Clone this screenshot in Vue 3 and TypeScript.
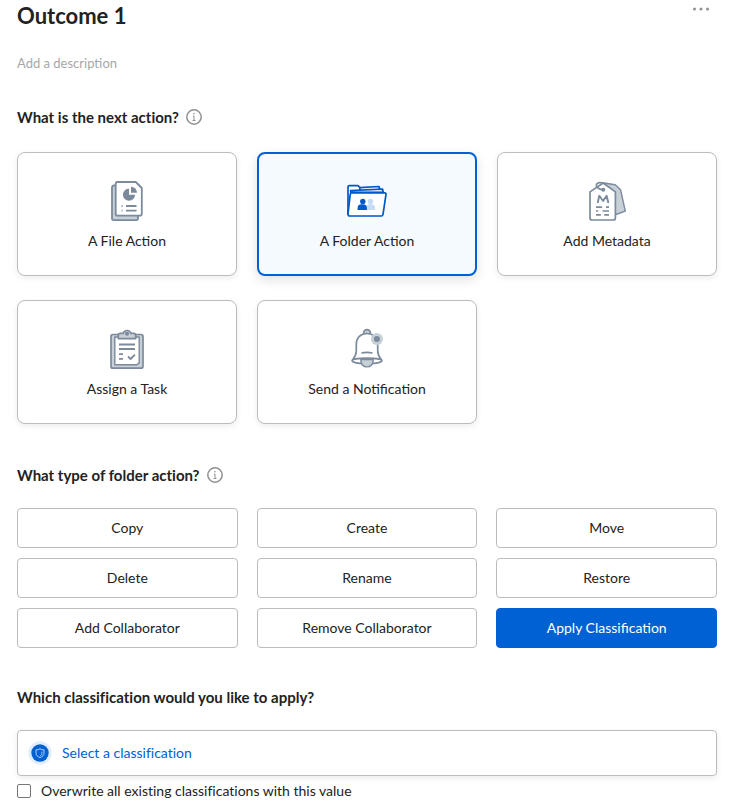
<script setup lang="ts">
import { ref } from 'vue'

type IconName = 'file' | 'folder' | 'metadata' | 'task' | 'bell'

interface ActionCard {
  label: string
  icon: IconName
}

const actions: ActionCard[] = [
  { label: 'A File Action', icon: 'file' },
  { label: 'A Folder Action', icon: 'folder' },
  { label: 'Add Metadata', icon: 'metadata' },
  { label: 'Assign a Task', icon: 'task' },
  { label: 'Send a Notification', icon: 'bell' },
]

const folderActions: string[] = [
  'Copy',
  'Create',
  'Move',
  'Delete',
  'Rename',
  'Restore',
  'Add Collaborator',
  'Remove Collaborator',
  'Apply Classification',
]

const selectedAction = ref<IconName>('folder')
const selectedFolderAction = ref('Apply Classification')
const description = ref('')
const overwrite = ref(false)
</script>

<template>
  <main class="outcome">
    <header class="header">
      <h1 class="title">Outcome 1</h1>
      <button class="icon-button more" type="button" aria-label="More options">
        <svg width="18" height="4" viewBox="0 0 18 4" fill="#909090">
          <circle cx="2.5" cy="2" r="1.5" />
          <circle cx="9" cy="2" r="1.5" />
          <circle cx="15.5" cy="2" r="1.5" />
        </svg>
      </button>
    </header>

    <input
      v-model="description"
      class="description"
      type="text"
      placeholder="Add a description"
      aria-label="Description"
    />

    <section class="section">
      <div class="heading-row">
        <h2 class="heading">What is the next action?</h2>
        <button class="icon-button" type="button" aria-label="About the next action">
          <svg width="16" height="16" viewBox="0 0 16 16" fill="none" stroke="#909090">
            <circle cx="8" cy="8" r="7.2" stroke-width="1.5" />
            <path d="M7 7h1v4.500M6.500 11.500h3" stroke-width="1" />
            <circle cx="8" cy="4.700" r=".8" fill="#909090" stroke="none" />
          </svg>
        </button>
      </div>

      <div class="cards">
        <button
          v-for="action in actions"
          :key="action.icon"
          type="button"
          class="card"
          :class="{ selected: selectedAction === action.icon }"
          :aria-pressed="selectedAction === action.icon"
          @click="selectedAction = action.icon"
        >
          <svg v-if="action.icon === 'file'" class="card-icon" viewBox="7 8 40 44" fill="none" stroke="#7b8a9c" stroke-width="1.8" stroke-linejoin="round">
            <path d="M15.5 15.5h-1.700a1.800 1.800 0 0 0-1.800 1.800v31a1.800 1.800 0 0 0 1.800 1.800h22.400a1.800 1.800 0 0 0 1.800-1.800v-2.500" fill="#c7cfd7" />
            <path d="M17.600 12h18.200l6 6v25.800a1.900 1.900 0 0 1-1.900 1.900H17.600a1.900 1.900 0 0 1-1.900-1.900V13.900a1.900 1.900 0 0 1 1.900-1.900Z" fill="#fff" />
            <path d="M29 18.600a6.100 6.100 0 1 0 6.100 6.100H29Z" fill="#7b8a9c" stroke="none" />
            <path d="M31 16.800a6 6 0 0 1 6 6h-6Z" fill="#7b8a9c" stroke="none" />
            <path d="M26 36h10.500M26 40.600h10.500" />
            <path d="M21.300 36h1.500M21.300 40.600h1.500" stroke="#a9b4bf" />
          </svg>

          <svg v-else-if="action.icon === 'folder'" class="card-icon" viewBox="7 8 40 44" fill="none" stroke="#0057c8" stroke-width="1.700" stroke-linejoin="round">
            <path d="M8 44V17a1.300 1.300 0 0 1 1.300-1.300h8.900l1.700 2.100v5.500L10 44Z" fill="#fff" />
            <path d="M19.500 17.700 39 16.500l.8 3" fill="#fff" />
            <path d="M10.500 20.600 42.500 19l.8 3.400H11Z" fill="#d5e6fb" />
            <path d="M11.700 22.900h33.100a1.200 1.200 0 0 1 1.200 1.400l-3 20.100a1.900 1.900 0 0 1-1.900 1.600H9.700a1.700 1.700 0 0 1-1.700-2l2.200-19.600a1.600 1.600 0 0 1 1.500-1.500Z" fill="#fff" />
            <path d="M25.800 40v-1.800a3.900 3.900 0 0 1 3.900-3.900h1.500a3.900 3.900 0 0 1 3.900 3.900V40Z" fill="#c5dcf7" stroke="none" />
            <circle cx="30.400" cy="31.400" r="2.700" fill="#c5dcf7" stroke="none" />
            <path d="M17.600 40v-1.800a3.900 3.900 0 0 1 3.900-3.900H23a3.900 3.900 0 0 1 3.900 3.900V40Z" fill="#0057c8" stroke="none" />
            <circle cx="22.800" cy="31.400" r="2.700" fill="#0057c8" stroke="none" />
          </svg>

          <svg v-else-if="action.icon === 'metadata'" class="card-icon" viewBox="7 8 40 44" fill="none" stroke="#7b8a9c" stroke-width="1.700" stroke-linejoin="round" stroke-linecap="round">
            <path d="m24 13 11.200 1.700 5.400 5.100 4.700 21.400-9.400 3.300Z" fill="#c7cfd7" stroke-width="1.400" />
            <path d="m23.200 13 12.200 8.900V48a2 2 0 0 1-2 2H12a2 2 0 0 1-2-2V21.900Z" fill="#fff" />
            <path d="M23.500 19.800c-3.800 0-7.800-2.400-7-5.200 1-3 6.200-2 8.700-.5" />
            <circle cx="23.300" cy="19.800" r="1.100" fill="#7b8a9c" />
            <path d="m17.800 32.200 1.500-6.400 3.800 5.200 3.500-5.200 1.600 6.400" stroke-width="1.900" />
            <path d="M16 37.100h6.100M26 37.100h3M16 41h2.200M22.500 41h6.500M16 44.900h4.800M24.200 44.900h4.800" stroke-linecap="butt" />
          </svg>

          <svg v-else-if="action.icon === 'task'" class="card-icon" viewBox="7 6 40 44" fill="none" stroke="#7b8a9c" stroke-width="1.700" stroke-linejoin="round">
            <rect x="11" y="14.500" width="32" height="33.700" rx="2" fill="#c7cfd7" />
            <path d="M14.800 17h24.400v25.900l-2.300 1.800H14.800Z" fill="#fff" stroke-width="1.400" />
            <path d="M18.300 18.600v-3.200a2 2 0 0 1 2-2H23a4.200 4.200 0 0 1 8 0h2.700a2 2 0 0 1 2 2v3.200Z" fill="#c7cfd7" />
            <circle cx="27" cy="13.700" r="1.200" fill="#7b8a9c" />
            <path d="M19 24.500h16M19 29h16M19 34.100h4M19 38.900h4" stroke-width="1.800" />
            <path d="m28 36.500 2.600 2.500 4.300-4.300" stroke-width="1.800" />
          </svg>

          <svg v-else class="card-icon" viewBox="7 6 40 44" fill="none" stroke="#7b8a9c" stroke-width="1.700" stroke-linejoin="round">
            <path d="M23.600 13.500v-.4a3.400 3.400 0 0 1 6.800 0v.4" fill="#c7cfd7" />
            <path d="M12.500 40c2.200-2.600 3.800-5.400 3.800-9.200v-6.200c0-7 4.500-11.100 10.700-11.100s10.700 4.100 10.700 11.100v6.200c0 3.800 1.600 6.600 3.800 9.200" fill="#fff" />
            <path d="M12.100 40.600c0-1.500 6.600-2.400 14.900-2.400s14.900.9 14.900 2.400c0 1.800-6.600 3.200-14.900 3.200s-14.900-1.400-14.900-3.200Z" fill="#fff" />
            <path d="M20.800 39.500h12.400c.3 4.600-2.600 7.400-6.200 7.400s-6.500-2.800-6.200-7.400Z" fill="#c7cfd7" stroke-width="1.400" />
            <path d="M21.500 33c3.300-.8 7.700-.8 11 0" />
            <circle cx="36.900" cy="18.900" r="6" fill="#c7cfd7" stroke="none" />
            <circle cx="36.900" cy="18.900" r="3" fill="#7b8a9c" stroke="none" />
          </svg>
          <span>{{ action.label }}</span>
        </button>
      </div>
    </section>

    <section class="section">
      <div class="heading-row">
        <h2 class="heading">What type of folder action?</h2>
        <button class="icon-button" type="button" aria-label="About folder actions">
          <svg width="16" height="16" viewBox="0 0 16 16" fill="none" stroke="#909090">
            <circle cx="8" cy="8" r="7.200" stroke-width="1.500" />
            <path d="M7 7h1v4.500M6.500 11.500h3" stroke-width="1" />
            <circle cx="8" cy="4.700" r=".8" fill="#909090" stroke="none" />
          </svg>
        </button>
      </div>

      <div class="options">
        <button
          v-for="name in folderActions"
          :key="name"
          type="button"
          class="option"
          :class="{ selected: selectedFolderAction === name }"
          :aria-pressed="selectedFolderAction === name"
          @click="selectedFolderAction = name"
        >
          {{ name }}
        </button>
      </div>
    </section>

    <section class="section">
      <div class="heading-row">
        <h2 class="heading">Which classification would you like to apply?</h2>
      </div>

      <button class="classification" type="button">
        <svg width="24" height="24" viewBox="0 0 24 24" fill="none">
          <circle cx="12" cy="12" r="11.700" fill="#e2edfa" />
          <circle cx="12" cy="12" r="8.700" fill="#0061d5" />
          <path d="M12 7.700c1.300.9 2.600 1.200 4 1.200v3.300c0 2.100-1.600 3.500-4 4.400-2.400-.9-4-2.300-4-4.400V8.900c1.400 0 2.700-.3 4-1.200Z" stroke="#c9def7" stroke-width=".9" />
          <path d="M13.800 10.600v2.200c0 .8-.6 1.400-1.700 2" stroke="#c9def7" stroke-width=".8" />
        </svg>
        <span>Select a classification</span>
      </button>

      <label class="overwrite">
        <input v-model="overwrite" type="checkbox" />
        <span>Overwrite all existing classifications with this value</span>
      </label>
    </section>
  </main>
</template>

<style>
body {
  margin: 0;
  background: #fff;
}
</style>

<style scoped>
.outcome {
  padding: 0 13px 4px 17px;
  color: #222;
  font-family: Lato, "Liberation Sans", sans-serif;
  font-size: 14px;
  line-height: 20px;
  -webkit-font-smoothing: antialiased;
}

button,
input {
  font: inherit;
  color: inherit;
}

button {
  cursor: pointer;
}

.header {
  display: flex;
  justify-content: space-between;
  align-items: flex-start;
}

.title {
  margin: 0;
  font-size: 22px;
  line-height: 32px;
  font-weight: 700;
}

.icon-button {
  display: flex;
  padding: 0;
  border: 0;
  background: none;
}

.more {
  padding: 7px;
}

.description {
  display: block;
  width: 100%;
  box-sizing: border-box;
  height: 20px;
  margin-top: 21px;
  padding: 0;
  border: 0;
  background: none;
  font-size: 13px;
}

.description::placeholder {
  color: #a7a7a7;
  opacity: 1;
}

.section {
  margin-top: 41px;
}

.section:last-child {
  margin-top: 39px;
}

.description + .section {
  margin-top: 34px;
}

.heading-row {
  display: flex;
  align-items: center;
  gap: 7px;
  height: 20px;
}

.heading {
  margin: 0;
  font-size: 15px;
  line-height: 20px;
  font-weight: 700;
}

.heading,
.classification,
.overwrite {
  font-variant-ligatures: none;
}

.cards {
  display: grid;
  grid-template-columns: repeat(3, 1fr);
  gap: 24px 20px;
  margin-top: 25px;
}

.card {
  display: flex;
  flex-direction: column;
  align-items: center;
  gap: 9px;
  padding: 25px 8px 24px;
  border: 1px solid #bcbcbc;
  border-radius: 8px;
  background: #fff;
  box-shadow: 0 2px 6px rgba(0, 0, 0, 0.08);
}

.card.selected {
  padding: 24px 7px 23px;
  border: 2px solid #0061d5;
  background: #f5faff;
  box-shadow: 0 4px 12px rgba(0, 0, 0, 0.12);
}

.card-icon {
  width: 40px;
  height: 44px;
}

.options {
  display: grid;
  grid-template-columns: repeat(3, 1fr);
  gap: 10px 19px;
  margin-top: 23px;
}

.option {
  height: 40px;
  padding: 0 8px;
  border: 1px solid #bcbcbc;
  border-radius: 4px;
  background: #fff;
}

.option.selected {
  border-color: #0061d5;
  background: #0061d5;
  color: #fff;
}

.classification {
  display: flex;
  align-items: center;
  gap: 10px;
  width: 100%;
  height: 46px;
  margin-top: 23px;
  padding: 0 10px;
  border: 1px solid #bcbcbc;
  border-radius: 4px;
  background: #fff;
  box-shadow: 0 2px 6px rgba(0, 0, 0, 0.08);
  color: #0061d5;
}

.overwrite {
  display: flex;
  align-items: center;
  gap: 10px;
  margin-top: 5px;
}

.overwrite input {
  appearance: none;
  width: 14px;
  height: 14px;
  margin: 0;
  border: 1px solid #767676;
  border-radius: 2px;
  background: #fff;
}

.overwrite input:checked {
  background: #0061d5;
  border-color: #0061d5;
}
</style>
